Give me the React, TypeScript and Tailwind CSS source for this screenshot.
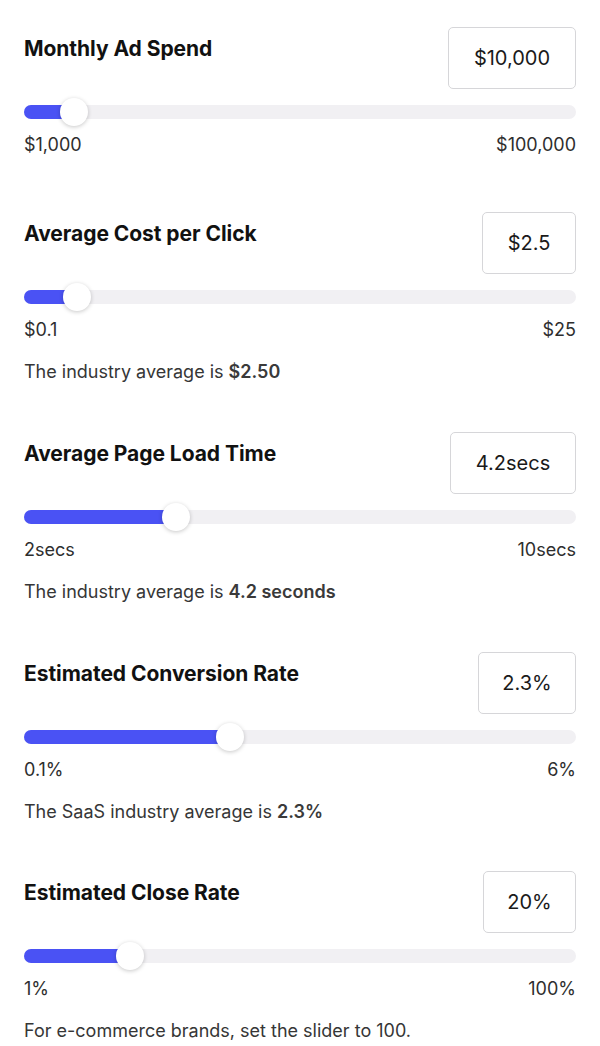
type Field = {
  title: string;
  display: string;
  boxWidth: string;
  value: number;
  min: number;
  max: number;
  minLabel: string;
  maxLabel: string;
  note?: { text: string; bold: string };
};

const fields: Field[] = [
  {
    title: "Monthly Ad Spend",
    display: "$10,000",
    boxWidth: "w-[128px]",
    value: 10000,
    min: 1000,
    max: 100000,
    minLabel: "$1,000",
    maxLabel: "$100,000",
  },
  {
    title: "Average Cost per Click",
    display: "$2.5",
    boxWidth: "w-[94px]",
    value: 2.5,
    min: 0.1,
    max: 25,
    minLabel: "$0.1",
    maxLabel: "$25",
    note: { text: "The industry average is ", bold: "$2.50" },
  },
  {
    title: "Average Page Load Time",
    display: "4.2secs",
    boxWidth: "w-[126px]",
    value: 4.2,
    min: 2,
    max: 10,
    minLabel: "2secs",
    maxLabel: "10secs",
    note: { text: "The industry average is ", bold: "4.2 seconds" },
  },
  {
    title: "Estimated Conversion Rate",
    display: "2.3%",
    boxWidth: "w-[98px]",
    value: 2.3,
    min: 0.1,
    max: 6,
    minLabel: "0.1%",
    maxLabel: "6%",
    note: { text: "The SaaS industry average is ", bold: "2.3%" },
  },
  {
    title: "Estimated Close Rate",
    display: "20%",
    boxWidth: "w-[93px]",
    value: 20,
    min: 1,
    max: 100,
    minLabel: "1%",
    maxLabel: "100%",
    note: { text: "For e-commerce brands, set the slider to 100.", bold: "" },
  },
];

function Slider({ value, min, max }: { value: number; min: number; max: number }) {
  const pct = ((value - min) / (max - min)) * 100;
  return (
    <div className="relative mt-[9px] h-[28px] flex items-center">
      <div className="h-[14px] w-full rounded-full bg-[#f1f0f3]" />
      <div
        className="absolute left-0 top-[7px] h-[14px] rounded-l-full bg-[#4a52f4]"
        style={{ width: `${pct}%` }}
      />
      <div
        className="absolute top-0 h-[28px] w-[28px] -translate-x-1/2 rounded-full bg-white shadow-[0_1px_4px_rgba(0,0,0,0.22)]"
        style={{ left: `${pct}%` }}
      />
    </div>
  );
}

function Section({ field }: { field: Field }) {
  return (
    <div>
      <div className="flex items-start justify-between">
        <h2 className="mt-[8px] text-[21px] leading-[28px] font-bold tracking-[-0.05px] text-[#111111]">
          {field.title}
        </h2>
        <div
          className={`${field.boxWidth} h-[62px] flex items-center justify-center rounded-[5px] border border-[#d6d6d9] bg-white text-[20px] text-[#1a1a1a]`}
        >
          {field.display}
        </div>
      </div>
      <Slider value={field.value} min={field.min} max={field.max} />
      <div className="mt-[7px] flex justify-between text-[18px] leading-[24px] text-[#2e2e2e]">
        <span>{field.minLabel}</span>
        <span>{field.maxLabel}</span>
      </div>
      {field.note && (
        <p className="mt-[18px] text-[18px] leading-[24px] text-[#363636]">
          {field.note.text}
          {field.note.bold && <span className="font-semibold text-[#3a3a3a]">{field.note.bold}</span>}
        </p>
      )}
    </div>
  );
}

export default function App() {
  return (
    <div
      className="min-h-[1046px] bg-white px-6 pt-[27px]"
      style={{ fontFamily: "Inter, 'Noto Sans', sans-serif" }}
    >
      <div className="flex flex-col">
        <Section field={fields[0]} />
        <div className="mt-[55px]">
          <Section field={fields[1]} />
        </div>
        <div className="mt-[48px]">
          <Section field={fields[2]} />
        </div>
        <div className="mt-[48px]">
          <Section field={fields[3]} />
        </div>
        <div className="mt-[47px]">
          <Section field={fields[4]} />
        </div>
      </div>
    </div>
  );
}
